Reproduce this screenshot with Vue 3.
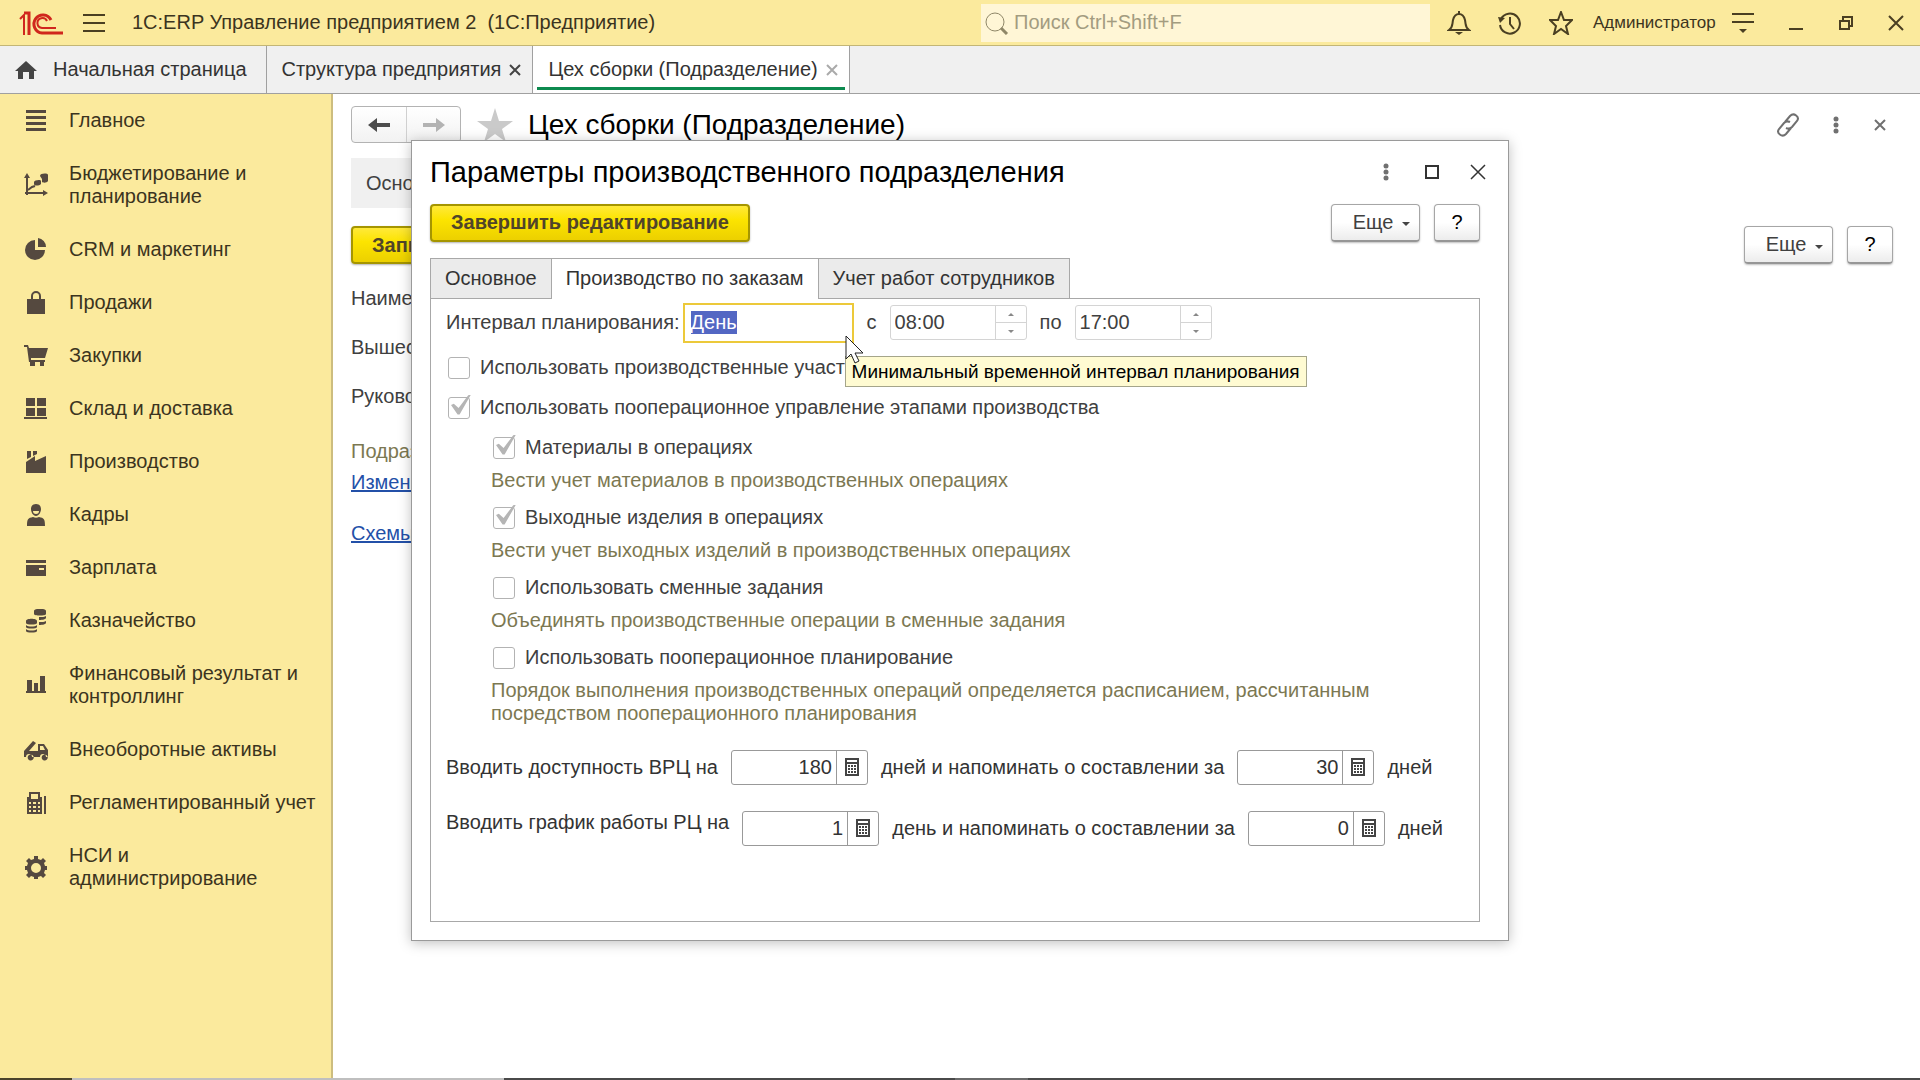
<script setup>
import { ref, onMounted } from 'vue'

const sections = [
  { title: 'Главное', fill: 'M2 1h20v3H2zM2 7h20v3H2zM2 13h20v3H2zM2 19h20v3H2z' },
  {
    title: 'Бюджетирование и планирование',
    fill: 'M3 0l3 5H0zM24 20l-5 3v-6zM10 9c0-2 7-3 7-1v3c-2 2-7 2-7 0zM16 3c0-3 8-3 8-1v6c-1 2-5 2-6 1V6z',
    stroke: 'M3 4v18M1 20h19M4 17l4-3 3-1'
  },
  { title: 'CRM и маркетинг', fill: 'M11 2v10h10a10 10 0 1 1-10-10zM14 0a9 9 0 0 1 8 9h-8z' },
  { title: 'Продажи', fill: 'M3 8h18v15H3z', stroke: 'M8 11V5a4 4 0 0 1 8 0v6' },
  { title: 'Закупки', fill: 'M0 1h4l1 3h19l-3 10H7v2h14v2H5L3 3H0zM6 18h5v4H6zM16 18h4v4h-4z' },
  { title: 'Склад и доставка', fill: 'M2 1h9v8H2zM13 1h9v8h-9zM2 11h9v8H2zM13 11h9v8h-9zM0 20h23v2H0z' },
  { title: 'Производство', fill: 'M2 23V12l9-6v5l11-5v17zM3 1h4v6L3 9zM9 1h4v3L9 6z' },
  {
    title: 'Кадры',
    fill: 'M12 1c4 0 5 3 5 5 0 3-2 7-5 7s-5-4-5-7c0-2 1-5 5-5zm-3 7c0 2 1 3 3 3s3-1 3-3zM3 23c0-7 1-8 6-9 2 1 4 1 6 0 5 1 6 2 6 9z'
  },
  { title: 'Зарплата', fill: 'M2 4h20v3H2zM2 9h20v11H2zM15 12v2h5v-2z' },
  {
    title: 'Казначейство',
    fill: 'M10 2c0-3 12-3 12 0v3c0 2-12 2-12 0zM15 8c3 0 6 0 7-1v2c0 1-3 2-7 2zM15 13c3 0 6 0 7-1v2c0 1-3 2-7 2zM2 12c0-3 11-3 11 0v2c0 2-11 2-11 0zM2 16c2 2 9 2 11 0v2c0 2-11 2-11 0zM2 20c2 2 9 2 11 0v2c0 2-11 2-11 0z'
  },
  { title: 'Финансовый результат и контроллинг', fill: 'M2 18h20v2H2zM3 7h5v11H3zM10 10h4v8h-4zM16 3h5v15h-5z' },
  {
    title: 'Внеоборотные активы',
    fill: 'M0 13L9 3l3 2-7 8h9V6h6l4 6v7h-2a3 3 0 0 0-6 0H8a3 3 0 0 0-6 0H0zM16 8v4h5l-2-4zM5 17a3 3 0 1 1 0 5 3 3 0 0 1 0-5zM19 17a3 3 0 1 1 0 5 3 3 0 0 1 0-5z'
  },
  {
    title: 'Регламентированный учет',
    fill: 'M5 1h11v5h2v17H3V6h2zM7 3v5h7V3zM5 11v2h2v-2zM9 11v2h3v-2zM14 11v2h2v-2zM5 15v2h2v-2zM9 15v2h3v-2zM14 15v2h2v-2zM5 19v2h2v-2zM9 19v2h3v-2zM14 19v2h2v-2zM20 5h2v18h-2z'
  },
  {
    title: 'НСИ и администрирование',
    fill: 'M10 1h4v3l3 1 2-2 3 3-2 2 1 3h2v4h-2l-1 3 2 2-3 3-2-2-3 1v2h-4v-2l-3-1-2 2-3-3 2-2-1-3H1v-4h2l1-3-2-2 3-3 2 2 3-1zM12 8a5 5 0 1 0 0 10 5 5 0 0 0 0-10z'
  }
]

const options = ref([
  {
    id: 'materials',
    title: 'Материалы в операциях',
    hint: 'Вести учет материалов в производственных операциях',
    checked: true
  },
  {
    id: 'outputs',
    title: 'Выходные изделия в операциях',
    hint: 'Вести учет выходных изделий в производственных операциях',
    checked: true
  },
  {
    id: 'shifts',
    title: 'Использовать сменные задания',
    hint: 'Объединять производственные операции в сменные задания',
    checked: false
  },
  {
    id: 'planning',
    title: 'Использовать пооперационное планирование',
    hint: 'Порядок выполнения производственных операций определяется расписанием, рассчитанным посредством пооперационного планирования',
    checked: false
  }
])

const horizons = ref([
  { id: 'vrc', before: 'Вводить доступность ВРЦ на', days: '180', middle: 'дней и напоминать о составлении за', remind: '30' },
  { id: 'rc', before: 'Вводить график работы РЦ на', days: '1', middle: 'день и напоминать о составлении за', remind: '0' }
])

const useAreas = ref(false)
const useOperations = ref(true)
const interval = ref('День')
const timeFrom = ref('08:00')
const timeTo = ref('17:00')
const intervalInput = ref(null)

onMounted(() => {
  intervalInput.value.focus()
  intervalInput.value.select()
})
</script>

<template>
  <div class="app">
    <header class="topbar">
      <svg class="logo" viewBox="0 0 44 24" width="44" height="24" aria-label="1С">
        <g fill="none" stroke="#d0271d" stroke-width="3">
          <path d="M1 8l4-4v20" stroke-width="2" />
          <path d="M5 2h5v22" />
          <path d="M32 9a9 9 0 1 0-9 13h21" />
          <path d="M28 10a5 5 0 1 0-5 7h14" stroke-width="2" />
        </g>
      </svg>
      <button class="icon-button menu" aria-label="Главное меню">
        <svg viewBox="0 0 22 18" width="22" height="18"><path d="M0 1h22M0 9h22M0 17h22" /></svg>
      </button>
      <h1 class="app-title">1С:ERP Управление предприятием 2&nbsp; (1С:Предприятие)</h1>
      <div class="search">
        <svg viewBox="0 0 24 24" width="24" height="24"><circle cx="10" cy="11" r="9" /><path d="M16 17l6 6" stroke-width="3" /></svg>
        <input type="text" aria-label="Поиск" placeholder="Поиск Ctrl+Shift+F" />
      </div>
      <div class="tools">
        <button class="icon-button" aria-label="Уведомления">
          <svg viewBox="0 0 24 24" width="24" height="24">
            <path d="M2 19c4-3 3-5 4-10 1-4 3-6 6-6s5 2 6 6c1 5 0 7 4 10zM12 3V0" />
            <path d="M8 21h8l-4 3z" fill="#4a3f22" stroke="none" />
          </svg>
        </button>
        <button class="icon-button" aria-label="История">
          <svg viewBox="0 0 24 24" width="24" height="24">
            <path d="M3 8a10 10 0 1 1-1 6M12 6v7l4 5" />
            <path d="M0 6l7 1-5 5z" fill="#4a3f22" stroke="none" />
          </svg>
        </button>
        <button class="icon-button" aria-label="Избранное">
          <svg viewBox="0 0 24 24" width="24" height="24"><path d="M12 1l3 8h8l-6 6 2 8-7-5-7 5 2-8-6-6h8z" /></svg>
        </button>
      </div>
      <span class="user">Администратор</span>
      <div class="window-tools">
        <button class="icon-button" aria-label="Настройка">
          <svg viewBox="0 0 22 22" width="22" height="22">
            <path d="M0 2h22M0 10h22" />
            <path d="M7 17h8l-4 4z" fill="#4a3f22" stroke="none" />
          </svg>
        </button>
        <button class="icon-button" aria-label="Свернуть">
          <svg viewBox="0 0 16 16" width="16" height="16"><path d="M1 14h14" /></svg>
        </button>
        <button class="icon-button" aria-label="Восстановить">
          <svg viewBox="0 0 16 16" width="16" height="16"><path d="M2 6h9v8H2zM5 6V2h9v9h-3" /></svg>
        </button>
        <button class="icon-button" aria-label="Закрыть">
          <svg viewBox="0 0 16 16" width="16" height="16"><path d="M1 1l14 14M15 1L1 15" /></svg>
        </button>
      </div>
    </header>

    <nav class="pages" aria-label="Открытые страницы">
      <a class="page home" href="#">
        <svg viewBox="0 0 22 20" width="22" height="20"><path d="M11 1l11 10h-3v8h-5v-7H8v7H3v-8H0z" fill="#444" /></svg>
        Начальная страница
      </a>
      <a class="page" href="#">
        Структура предприятия
        <svg class="close" viewBox="0 0 12 12" width="12" height="12"><path d="M1 1l10 10M11 1L1 11" /></svg>
      </a>
      <a class="page active" href="#">
        Цех сборки (Подразделение)
        <svg class="close" viewBox="0 0 12 12" width="12" height="12"><path d="M1 1l10 10M11 1L1 11" /></svg>
      </a>
    </nav>

    <div class="body">
      <nav class="sections" aria-label="Разделы">
        <a v-for="section in sections" :key="section.title" class="section" href="#">
          <svg viewBox="0 0 24 24" width="24" height="24">
            <path :d="section.fill" fill="#55493f" fill-rule="evenodd" />
            <path v-if="section.stroke" :d="section.stroke" fill="none" stroke="#55493f" stroke-width="2" />
          </svg>
          <span>{{ section.title }}</span>
        </a>
      </nav>

      <main class="form">
        <div class="form-head">
          <div class="history">
            <button aria-label="Назад">
              <svg viewBox="0 0 22 16" width="22" height="16"><path d="M0 8l9-7v5h13v4H9v5z" fill="#4d4d4d" /></svg>
            </button>
            <button aria-label="Вперед">
              <svg viewBox="0 0 22 16" width="22" height="16"><path d="M22 8l-9-7v5H0v4h13v5z" fill="#b3b3b3" /></svg>
            </button>
          </div>
          <svg class="favorite" viewBox="0 0 36 34" width="36" height="34">
            <path d="M18 0l4 13h14L25 21l4 13-11-8-11 8 4-13L0 13h14z" fill="#cacaca" />
          </svg>
          <h2>Цех сборки (Подразделение)</h2>
          <div class="form-tools">
            <button class="icon-button" aria-label="Ссылка">
              <svg viewBox="0 0 24 24" width="24" height="24">
                <path d="M9 9l5-6c4-4 10 1 7 5l-5 6c-2 2-4 2-6 1M15 15l-5 6c-4 4-10-1-7-5l5-6c2-2 4-2 6-1" />
              </svg>
            </button>
            <button class="icon-button" aria-label="Действия">
              <svg viewBox="-5 0 16 18" width="16" height="18" class="dots"><circle cx="3" cy="3" r="2.5" /><circle cx="3" cy="9" r="2.5" /><circle cx="3" cy="15" r="2.5" /></svg>
            </button>
            <button class="icon-button" aria-label="Закрыть форму">
              <svg viewBox="-2 -2 16 16" width="16" height="16"><path d="M1 1l10 10M11 1L1 11" /></svg>
            </button>
          </div>
        </div>
        <div class="form-nav"><a href="#">Основное</a></div>
        <div class="commands">
          <button class="primary">Записать и закрыть</button>
          <div class="extra">
            <button class="plain more">Еще <i class="caret"></i></button>
            <button class="plain help">?</button>
          </div>
        </div>
        <div class="fields">
          <span>Наименование:</span>
          <span>Вышестоящее:</span>
          <span>Руководитель:</span>
        </div>
        <p class="group">Подразделение</p>
        <div class="links">
          <a href="#">Изменить</a>
          <a href="#">Схемы</a>
        </div>
      </main>
    </div>

    <footer class="taskbar"></footer>

    <div class="overlay">
      <section class="dialog" role="dialog" aria-labelledby="dialog-title">
        <div class="dialog-head">
          <h2 id="dialog-title">Параметры производственного подразделения</h2>
          <div class="dialog-tools">
            <button class="icon-button" aria-label="Действия">
              <svg viewBox="-5 0 16 18" width="16" height="18" class="dots"><circle cx="3" cy="3" r="2.5" /><circle cx="3" cy="9" r="2.5" /><circle cx="3" cy="15" r="2.5" /></svg>
            </button>
            <button class="icon-button" aria-label="Развернуть">
              <svg viewBox="0 0 14 14" width="14" height="14"><path d="M1 1h12v12H1z" /></svg>
            </button>
            <button class="icon-button" aria-label="Закрыть">
              <svg viewBox="0 0 16 16" width="16" height="16"><path d="M1 1l14 14M15 1L1 15" stroke-width="1.5" /></svg>
            </button>
          </div>
        </div>

        <div class="commands">
          <button class="primary">Завершить редактирование</button>
          <div class="extra">
            <button class="plain more">Еще <i class="caret"></i></button>
            <button class="plain help">?</button>
          </div>
        </div>

        <div class="tabs" role="tablist">
          <button role="tab" aria-selected="false">Основное</button>
          <button role="tab" aria-selected="true" class="current">Производство по заказам</button>
          <button role="tab" aria-selected="false">Учет работ сотрудников</button>
        </div>

        <div class="panel" role="tabpanel">
          <div class="interval">
            <label for="interval">Интервал планирования:</label>
            <div class="interval-field">
              <input id="interval" ref="intervalInput" v-model="interval" type="text" />
              <div class="tooltip" role="tooltip">Минимальный временной интервал планирования</div>
              <svg class="pointer" viewBox="0 0 20 30" width="20" height="30">
                <path d="M1 1v23l5-5 4 9 4-2-4-8h8z" fill="#fff" stroke="#222" />
              </svg>
            </div>
            <label for="time-from">с</label>
            <div class="time">
              <input id="time-from" v-model="timeFrom" type="text" />
              <div class="spin">
                <button aria-label="Больше"><i class="up"></i></button>
                <button aria-label="Меньше"><i class="down"></i></button>
              </div>
            </div>
            <label for="time-to">по</label>
            <div class="time">
              <input id="time-to" v-model="timeTo" type="text" />
              <div class="spin">
                <button aria-label="Больше"><i class="up"></i></button>
                <button aria-label="Меньше"><i class="down"></i></button>
              </div>
            </div>
          </div>

          <label class="check"><input v-model="useAreas" type="checkbox" />Использовать производственные участки</label>
          <label class="check"><input v-model="useOperations" type="checkbox" />Использовать пооперационное управление этапами производства</label>

          <div class="options">
            <div v-for="option in options" :key="option.id">
              <label class="check"><input v-model="option.checked" type="checkbox" :aria-describedby="option.id" />{{ option.title }}</label>
              <p :id="option.id" class="hint">{{ option.hint }}</p>
            </div>
          </div>

          <div class="horizons">
            <div v-for="row in horizons" :key="row.id" class="horizon" :class="row.id">
              <label :for="row.id + '-days'">{{ row.before }}</label>
              <div class="number">
                <input :id="row.id + '-days'" v-model="row.days" type="text" />
                <button aria-label="Калькулятор">
                  <svg viewBox="0 0 14 18" width="14" height="18">
                    <path d="M1 1h12v16H1zM1 5h12" />
                    <path d="M3 8h2M6 8h2M9 8h2M3 11h2M6 11h2M9 11h2M3 14h2M6 14h2M9 14h2" />
                  </svg>
                </button>
              </div>
              <label :for="row.id + '-remind'">{{ row.middle }}</label>
              <div class="number">
                <input :id="row.id + '-remind'" v-model="row.remind" type="text" />
                <button aria-label="Калькулятор">
                  <svg viewBox="0 0 14 18" width="14" height="18">
                    <path d="M1 1h12v16H1zM1 5h12" />
                    <path d="M3 8h2M6 8h2M9 8h2M3 11h2M6 11h2M9 11h2M3 14h2M6 14h2M9 14h2" />
                  </svg>
                </button>
              </div>
              <span>дней</span>
            </div>
          </div>
        </div>
      </section>
    </div>
  </div>
</template>

<style>
body {
  margin: 0;
}
</style>

<style scoped>
.app {
  position: relative;
  display: flex;
  flex-direction: column;
  min-height: 100vh;
  background: #fff;
  color: #404040;
  font: 20px/23px "Liberation Sans", Arial, sans-serif;
}

.app *,
.app *::before {
  box-sizing: border-box;
}

h1,
h2,
p {
  margin: 0;
  font-weight: normal;
}

button,
input {
  margin: 0;
  padding: 0;
  border: 0;
  background: none;
  color: inherit;
  font: inherit;
}

a {
  color: inherit;
  text-decoration: none;
}

svg {
  display: block;
  flex: none;
}

.icon-button svg {
  fill: none;
  stroke: #4a3f22;
  stroke-width: 2;
}

/* Top bar */
.topbar {
  display: flex;
  align-items: center;
  height: 46px;
  padding: 0 16px 0 19px;
  border-bottom: 1px solid #c3b676;
  background: #fbea9d;
}

.menu {
  margin: 0 27px 0 20px;
}

.app-title {
  flex: 1;
  color: #3b3420;
  font-size: 20px;
  white-space: nowrap;
}

.search {
  display: flex;
  align-items: center;
  gap: 5px;
  width: 449px;
  height: 38px;
  padding-left: 4px;
  background: #fff6d6;
}

.search svg {
  fill: none;
  stroke: #8f8768;
  stroke-width: 1;
}

.search input {
  flex: 1;
  min-width: 0;
  outline: none;
}

.search input::placeholder {
  color: #a39c80;
  opacity: 1;
}

.tools {
  display: flex;
  gap: 27px;
  margin: 0 20px 0 17px;
}

.user {
  width: 122px;
  color: #3b3420;
  font-size: 17px;
  white-space: nowrap;
}

.window-tools {
  display: flex;
  align-items: center;
  gap: 34px;
  margin-left: 17px;
}

/* Open pages */
.pages {
  display: flex;
  height: 48px;
  border-bottom: 1px solid #a0a0a0;
  background: #f0f0f0;
  color: #333;
}

.page {
  display: flex;
  align-items: center;
  gap: 8px;
  padding: 0 11px 0 15px;
  border-right: 1px solid #a0a0a0;
  white-space: nowrap;
}

.home {
  gap: 16px;
  padding-right: 19px;
}

.page.active {
  background: linear-gradient(#0d8a4f, #0d8a4f) 4px 41px / calc(100% - 8px) 3px no-repeat #fff;
}

.close {
  fill: none;
  stroke: #444;
  stroke-width: 2;
}

.active .close {
  stroke: #aaa;
}

.body {
  display: flex;
  flex: 1;
}

/* Sections panel */
.sections {
  flex: none;
  width: 333px;
  border-right: 2px solid #cdbd7f;
  background: #fbea9d;
  color: #3b3420;
}

.section {
  display: flex;
  align-items: center;
  gap: 21px;
  padding: 15px 14px 15px 24px;
}

.section svg {
  margin-block: -1px;
}

/* Underlying form */
.form {
  display: flex;
  flex: 1;
  flex-direction: column;
  align-items: stretch;
  min-width: 0;
  padding: 12px 27px 0 18px;
}

.form-head {
  display: flex;
  align-items: center;
  height: 37px;
}

.form-head h2 {
  flex: 1;
  color: #000;
  font-size: 28px;
}

.history {
  display: flex;
  height: 37px;
  border: 1px solid #b3b3b3;
  border-radius: 4px;
  background: linear-gradient(#fff, #f2f2f2);
}

.history button {
  display: grid;
  place-items: center;
  width: 54px;
}

.history button + button {
  border-left: 1px solid #d0d0d0;
}

.favorite {
  margin: 0 15px 0 16px;
}

.form-tools {
  display: flex;
  align-items: center;
  gap: 28px;
  margin-right: 5px;
}

.form-tools .icon-button svg {
  stroke: #707070;
}

.icon-button .dots,
.form-tools .icon-button .dots {
  fill: #707070;
  stroke: none;
}

.form-nav {
  align-self: flex-start;
  margin: 15px 0 18px;
  padding: 14px 15px 13px;
  background: #f0f0f0;
}

.commands {
  display: flex;
  align-items: center;
  justify-content: space-between;
}

.primary {
  height: 38px;
  padding: 0 19px;
  border: 2px solid #a59500;
  border-radius: 4px;
  background: linear-gradient(#ffe93a, #fce400 40%, #ecd000);
  box-shadow: 0 1px 2px rgba(0, 0, 0, 0.3);
  color: #50452a;
  font-weight: bold;
}

.extra {
  display: flex;
  gap: 14px;
}

.plain {
  display: flex;
  align-items: center;
  justify-content: center;
  height: 38px;
  border: 1px solid #a6a6a6;
  border-bottom: 2px solid #969696;
  border-radius: 4px;
  background: linear-gradient(#fff 50%, #ececec);
  box-shadow: 0 1px 2px rgba(0, 0, 0, 0.25);
}

.more {
  gap: 9px;
  width: 89px;
  padding-left: 12px;
}

.help {
  width: 46px;
  color: #000;
}

.caret {
  width: 0;
  margin-top: 4px;
  border: 4px solid transparent;
  border-top-color: #444;
  border-bottom: 0;
}

.fields {
  display: flex;
  flex-direction: column;
  gap: 26px;
  margin-top: 23px;
}

.group {
  margin: 32px 0 8px;
  color: #7c7852;
}

.links {
  display: flex;
  flex-direction: column;
  align-items: flex-start;
  gap: 28px;
}

.links a {
  color: #2350a8;
  text-decoration: underline;
}

.taskbar {
  height: 2px;
  background: linear-gradient(90deg, #4a432b 72px, #bfbfbf 72px 504px, #4a4a4a 504px 955px, #6a6a6a 955px 1028px, #4a4a4a 1028px);
}

/* Parameters window */
.overlay {
  position: absolute;
  inset: 0;
  display: grid;
  place-items: center;
}

.dialog {
  width: 1098px;
  max-width: 100%;
  padding: 0 28px 18px 18px;
  border: 1px solid #9a9a9a;
  background: #fff;
  box-shadow: 0 2px 12px rgba(0, 0, 0, 0.25);
}

.dialog-head {
  display: flex;
  align-items: center;
  justify-content: space-between;
  height: 63px;
}

.dialog-head h2 {
  color: #000;
  font-size: 29px;
}

.dialog-tools {
  display: flex;
  align-items: center;
  gap: 31px;
  margin-right: -6px;
}

.dialog-tools .icon-button svg:not(.dots) {
  stroke: #333;
}

.tabs {
  display: flex;
  margin-top: 16px;
}

.tabs button {
  height: 40px;
  padding: 0 14px;
  border: 1px solid #a8a8a8;
  border-width: 1px 1px 0 0;
  background: #ebebeb;
  color: #333;
}

.tabs button:first-child {
  border-left-width: 1px;
}

.tabs .current {
  z-index: 1;
  height: 41px;
  margin-bottom: -1px;
  padding-bottom: 1px;
  background: #fff;
}

.panel {
  padding: 4px 15px 75px;
  border: 1px solid #a8a8a8;
}

.interval {
  display: flex;
  align-items: center;
  gap: 13px;
  margin-bottom: 5px;
}

.interval-field {
  position: relative;
  margin-left: -10px;
}

.interval-field input {
  display: block;
  width: 171px;
  height: 40px;
  padding: 0 6px;
  border: 2px solid #ecc93a;
  outline: none;
}

.interval-field input::selection {
  background: #5367c3;
  color: #fff;
}

.tooltip {
  position: absolute;
  z-index: 1;
  top: 53px;
  left: 162px;
  padding: 3px 6px;
  border: 1px solid #a5a58a;
  background: #fffbd2;
  color: #000;
  font-size: 19px;
  white-space: nowrap;
}

.pointer {
  position: absolute;
  z-index: 2;
  top: 32px;
  left: 162px;
}

.time {
  display: flex;
  width: 137px;
  height: 35px;
  border: 1px solid #d4d4d4;
  border-radius: 3px;
}

.time input {
  flex: 1;
  min-width: 0;
  padding-left: 4px;
}

.spin {
  display: grid;
  width: 31px;
  border-left: 1px solid #d4d4d4;
}

.spin button {
  display: grid;
  place-items: center;
}

.spin button + button {
  border-top: 1px solid #d4d4d4;
}

.up,
.down {
  border: 3px solid transparent;
}

.up {
  border-top: 0;
  border-bottom-color: #888;
}

.down {
  border-bottom: 0;
  border-top-color: #888;
}

.check {
  display: flex;
  align-items: center;
  gap: 10px;
  height: 40px;
  margin-left: 2px;
}

.check input {
  position: relative;
  width: 22px;
  height: 22px;
  border: 1px solid #b3b3b3;
  border-radius: 3px;
  appearance: none;
}

.check input:checked::before {
  position: absolute;
  top: -3px;
  left: 2px;
  width: 20px;
  height: 20px;
  background: #b5b5b5;
  clip-path: polygon(0 52%, 14% 46%, 38% 68%, 86% 4%, 100% 0, 43% 100%, 33% 100%);
  content: "";
}

.options {
  margin-left: 45px;
}

.hint {
  padding: 1px 0 6px;
  color: #7c7852;
}

.horizons {
  display: flex;
  flex-direction: column;
  gap: 26px;
  margin-top: 19px;
  color: #333;
}

.horizon {
  display: flex;
  align-items: center;
  gap: 13px;
  white-space: nowrap;
}

.horizon.rc label:first-child {
  align-self: flex-start;
}

.number {
  display: flex;
  width: 137px;
  height: 35px;
  border: 1px solid #999;
  border-radius: 3px;
}

.number input {
  flex: 1;
  min-width: 0;
  padding-right: 4px;
  text-align: right;
}

.number button {
  display: grid;
  place-items: center;
  width: 31px;
  border-left: 1px solid #999;
}

.number svg {
  fill: none;
  stroke: #444;
  stroke-width: 2;
}
</style>
